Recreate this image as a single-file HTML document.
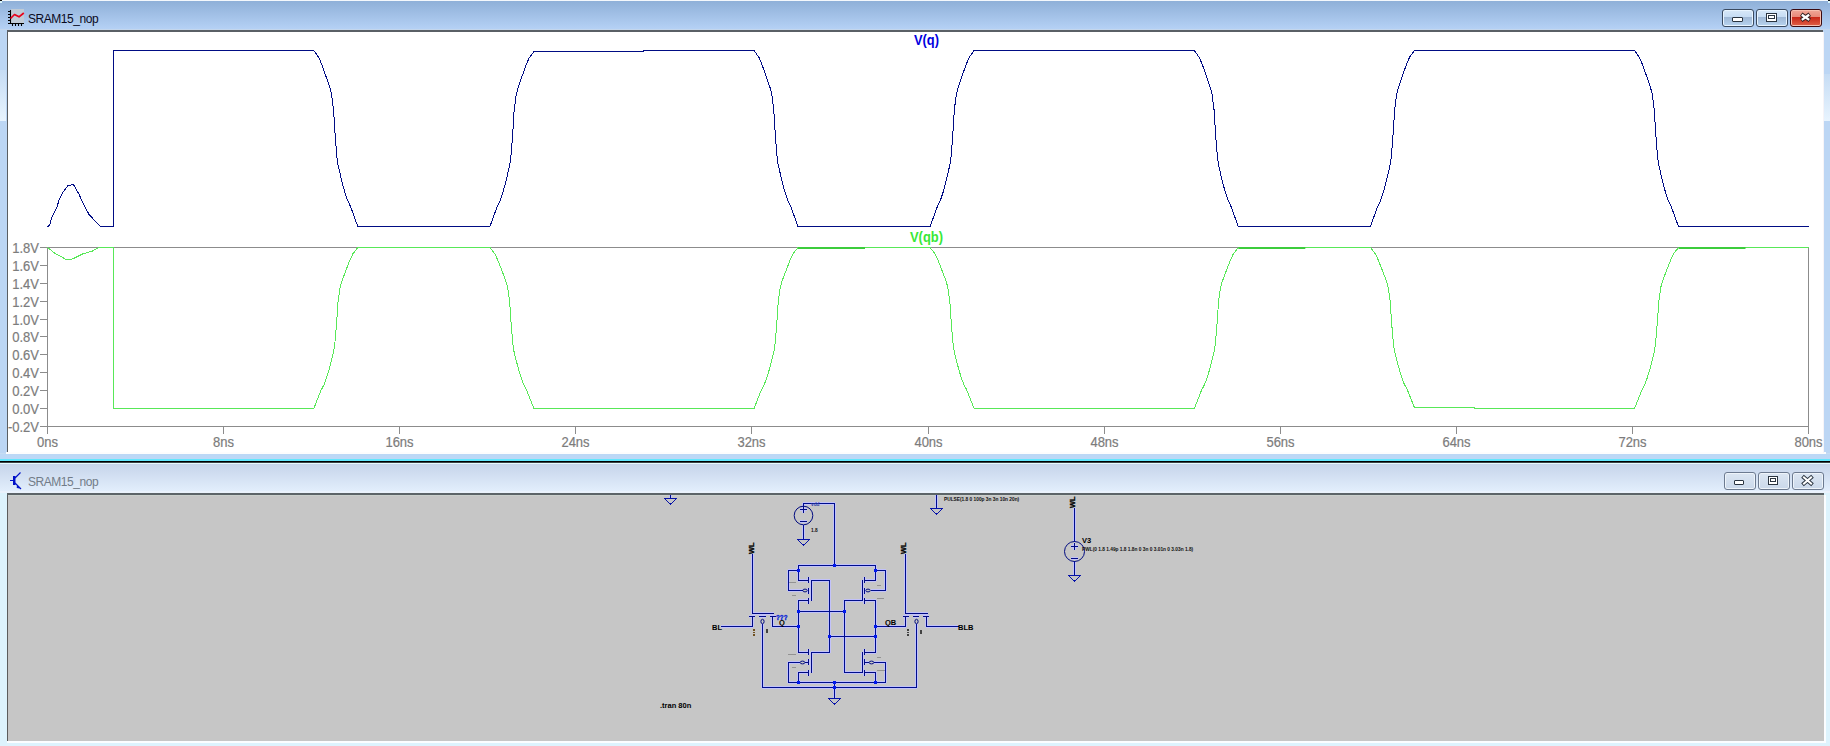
<!DOCTYPE html>
<html><head><meta charset="utf-8">
<style>
html,body{margin:0;padding:0;}
body{width:1830px;height:746px;overflow:hidden;position:relative;background:#c6dcf2;font-family:"Liberation Sans",sans-serif;}
.abs{position:absolute;}
svg text{font-family:"Liberation Sans",sans-serif;}
.ax{font-size:14px;fill:#7c7c7c;stroke:#7c7c7c;stroke-width:0.2px;}
.tt{font-size:14px;font-weight:bold;}
.lbl{font-size:7.5px;font-weight:bold;fill:#000;}
.tiny{font-size:4.8px;font-weight:bold;fill:#101010;}
.title{position:absolute;font-size:12px;letter-spacing:-0.45px;white-space:nowrap;}
.btn{position:absolute;box-sizing:border-box;border-radius:3px;}
</style></head><body>
<!-- top window frame -->
<div class="abs" style="left:0;top:0;width:1830px;height:1px;background:#f4f8fc"></div>
<div class="abs" style="left:0;top:1px;width:1830px;height:29px;background:linear-gradient(#8fb0d8,#b6d2f6)"></div>
<div class="abs" style="left:0;top:29px;width:1830px;height:1px;background:#c4d6ec"></div>
<div class="abs" style="left:0;top:30px;width:1830px;height:423px;background:#bcd6f4"></div>
<div class="abs" style="left:0;top:70px;width:6px;height:51px;background:linear-gradient(#c6dcf4,#e8f4fe)"></div>
<div class="abs" style="left:1824px;top:74px;width:6px;height:47px;background:linear-gradient(#c6dcf4,#e8f4fe)"></div>
<div class="abs" style="left:7px;top:30px;width:1816px;height:2px;background:#5a6066"></div>
<div class="abs" style="left:7px;top:32px;width:1px;height:420px;background:#5a5e62"></div>
<div class="abs" style="left:8px;top:32px;width:1815px;height:420px;background:#fff"></div>
<div class="abs" style="left:6px;top:452px;width:1820px;height:2px;background:#fdfdfd"></div>
<div class="abs" style="left:1823px;top:32px;width:1px;height:421px;background:#f6f4f8"></div>
<div class="abs" style="left:0;top:454px;width:1830px;height:5px;background:#bcd8f6"></div>
<div class="abs" style="left:0;top:459px;width:1830px;height:2px;background:#62e6fc"></div>
<div class="abs" style="left:0;top:461px;width:1830px;height:1px;background:#000"></div>
<div class="abs" style="left:0;top:462px;width:1830px;height:1px;background:#3a4448"></div>
<!-- bottom window frame -->
<div class="abs" style="left:0;top:463px;width:1830px;height:1px;background:#e6fafe"></div>
<div class="abs" style="left:0;top:464px;width:1830px;height:27px;background:linear-gradient(#c6d4ea,#e2eefc)"></div>
<div class="abs" style="left:0;top:491px;width:1830px;height:2px;background:#eaf2fc"></div>
<div class="abs" style="left:0;top:493px;width:1830px;height:253px;background:#ddf3fd"></div>
<div class="abs" style="left:7px;top:493px;width:1817px;height:2px;background:#5c6468"></div>
<div class="abs" style="left:7px;top:495px;width:1px;height:246px;background:#5c5c5c"></div>
<div class="abs" style="left:8px;top:495px;width:1816px;height:246px;background:#c6c6c6"></div>
<div class="abs" style="left:8px;top:495px;width:1816px;height:1px;background:#cad0cc"></div>
<div class="abs" style="left:7px;top:741px;width:1819px;height:2px;background:#fbfdff"></div>
<div class="abs" style="left:1824px;top:495px;width:2px;height:246px;background:#fbfdff"></div>

<div class="abs" style="left:0;top:0;width:2px;height:1px;background:#101010"></div>
<div class="abs" style="left:0;top:1px;width:2px;height:2px;background:#d8f4fc"></div>
<div class="abs" style="left:1828px;top:0;width:2px;height:1px;background:#101010"></div>
<div class="abs" style="left:1828px;top:1px;width:2px;height:2px;background:#d8f4fc"></div>
<!-- title texts -->
<div class="title" style="left:28px;top:12px;color:#0a0a1e">SRAM15_nop</div>
<div class="title" style="left:28px;top:474.5px;color:#727c88">SRAM15_nop</div>

<!-- icons -->
<svg class="abs" style="left:0;top:0" width="40" height="40">
<rect x="11" y="9" width="13" height="14" fill="#c6ccd2" opacity="0.85"/>
<path d="M10.5,10 V24 M8,11.5 H10 M8,14.5 H10 M8,17.5 H10 M8,20.5 H10 M8,23.5 H24 M12.5,24 V26 M15.5,24 V26 M18.5,24 V26 M21.5,24 V26" stroke="#000" stroke-width="1.1"/>
<path d="M10.5,18.5 L14.5,14.5 L19,16.8 L23.8,13" fill="none" stroke="#e8001a" stroke-width="1.7" stroke-linejoin="round"/>
</svg>
<svg class="abs" style="left:0;top:460px" width="40" height="40">
<path d="M10,20.5 H14 M14.5,16 V25 M15,18 L20.5,12.5 M15,23 L21,29" stroke="#0010c8" stroke-width="1.2" fill="none"/>
<rect x="13" y="16" width="2.4" height="9" fill="#0010c8"/>
<path d="M17.5,26 L19.5,28 L17,27.5 Z" fill="#0010c8" stroke="#0010c8" stroke-width="1"/>
</svg>

<!-- buttons top -->
<div class="btn" style="left:1722px;top:9px;width:32px;height:18px;border:1px solid #3a4a60;background:linear-gradient(#d8e8f8 0%,#c6dcf4 45%,#9fb8d6 46%,#b8d4f0 100%);box-shadow:inset 0 0 0 1px #e8f4ff"></div>
<div class="btn" style="left:1756px;top:9px;width:32px;height:18px;border:1px solid #3a4a60;background:linear-gradient(#d8e8f8 0%,#c6dcf4 45%,#9fb8d6 46%,#b8d4f0 100%);box-shadow:inset 0 0 0 1px #e8f4ff"></div>
<div class="btn" style="left:1790px;top:9px;width:32px;height:18px;border:1px solid #3a0a10;background:linear-gradient(#f0a898 0%,#e88878 45%,#c82818 46%,#e06048 100%);box-shadow:inset 0 0 0 1px #f8c0b0"></div>
<div class="abs" style="left:1732px;top:17px;width:11px;height:5px;box-sizing:border-box;border:1px solid #2a3440;border-radius:1px;background:#fff"></div>
<div class="abs" style="left:1766px;top:13px;width:11px;height:9px;box-sizing:border-box;border:1px solid #2a3440;background:#fff;box-shadow:inset 0 0 0 1px #fff"></div>
<div class="abs" style="left:1768px;top:15px;width:7px;height:4px;box-sizing:border-box;border:1px solid #2a3440"></div>
<svg class="abs" style="left:1790px;top:9px" width="32" height="18"><path d="M11.2,5.3 L19.8,11.3 M19.8,5.3 L11.2,11.3" stroke="#302020" stroke-width="4.2"/><path d="M11.8,5.7 L19.2,10.9 M19.2,5.7 L11.8,10.9" stroke="#fff" stroke-width="2.3"/></svg>
<!-- buttons bottom -->
<div class="btn" style="left:1724px;top:472px;width:32px;height:18px;border:1px solid #6c7a90;background:linear-gradient(#dce6f2,#cad8ea);box-shadow:inset 0 0 0 1px #eef4fa"></div>
<div class="btn" style="left:1758px;top:472px;width:32px;height:18px;border:1px solid #6c7a90;background:linear-gradient(#dce6f2,#cad8ea);box-shadow:inset 0 0 0 1px #eef4fa"></div>
<div class="btn" style="left:1792px;top:472px;width:32px;height:18px;border:1px solid #6c7a90;background:linear-gradient(#dce6f2,#cad8ea);box-shadow:inset 0 0 0 1px #eef4fa"></div>
<div class="abs" style="left:1734px;top:480px;width:10px;height:5px;box-sizing:border-box;border:1px solid #2a3440;border-radius:1px;background:#fff"></div>
<div class="abs" style="left:1768px;top:476px;width:10px;height:9px;box-sizing:border-box;border:1px solid #2a3440;background:#fff"></div>
<div class="abs" style="left:1770px;top:478px;width:6px;height:4px;box-sizing:border-box;border:1px solid #2a3440"></div>
<svg class="abs" style="left:1792px;top:472px" width="32" height="18"><path d="M12,5.5 L19,11.5 M19,5.5 L12,11.5" stroke="#2a3440" stroke-width="4" stroke-linecap="square"/><path d="M12,5.5 L19,11.5 M19,5.5 L12,11.5" stroke="#fff" stroke-width="2.1" stroke-linecap="square"/></svg>

<!-- plot -->
<svg class="abs" style="left:0;top:0" width="1830" height="460">
<path d="M47.5,247.5 H1808.5 V426.5 H47.5 Z" fill="none" stroke="#8c8c8c" stroke-width="1"/>
<path d="M40,247.5 H47" stroke="#8c8c8c" stroke-width="1"/>
<text transform="translate(39,252.5) scale(0.93,1)" class="ax" text-anchor="end">1.8V</text>
<path d="M40,265.5 H47" stroke="#8c8c8c" stroke-width="1"/>
<text transform="translate(39,270.5) scale(0.93,1)" class="ax" text-anchor="end">1.6V</text>
<path d="M40,283.5 H47" stroke="#8c8c8c" stroke-width="1"/>
<text transform="translate(39,288.5) scale(0.93,1)" class="ax" text-anchor="end">1.4V</text>
<path d="M40,301.5 H47" stroke="#8c8c8c" stroke-width="1"/>
<text transform="translate(39,306.5) scale(0.93,1)" class="ax" text-anchor="end">1.2V</text>
<path d="M40,319.5 H47" stroke="#8c8c8c" stroke-width="1"/>
<text transform="translate(39,324.5) scale(0.93,1)" class="ax" text-anchor="end">1.0V</text>
<path d="M40,336.5 H47" stroke="#8c8c8c" stroke-width="1"/>
<text transform="translate(39,341.5) scale(0.93,1)" class="ax" text-anchor="end">0.8V</text>
<path d="M40,354.5 H47" stroke="#8c8c8c" stroke-width="1"/>
<text transform="translate(39,359.5) scale(0.93,1)" class="ax" text-anchor="end">0.6V</text>
<path d="M40,372.5 H47" stroke="#8c8c8c" stroke-width="1"/>
<text transform="translate(39,377.5) scale(0.93,1)" class="ax" text-anchor="end">0.4V</text>
<path d="M40,390.5 H47" stroke="#8c8c8c" stroke-width="1"/>
<text transform="translate(39,395.5) scale(0.93,1)" class="ax" text-anchor="end">0.2V</text>
<path d="M40,408.5 H47" stroke="#8c8c8c" stroke-width="1"/>
<text transform="translate(39,413.5) scale(0.93,1)" class="ax" text-anchor="end">0.0V</text>
<path d="M40,426.5 H47" stroke="#8c8c8c" stroke-width="1"/>
<text transform="translate(39,431.5) scale(0.93,1)" class="ax" text-anchor="end">-0.2V</text>
<path d="M47.5,426 V434" stroke="#8c8c8c" stroke-width="1"/>
<text transform="translate(47.5,446.8) scale(0.93,1)" class="ax" text-anchor="middle">0ns</text>
<path d="M223.5,426 V434" stroke="#8c8c8c" stroke-width="1"/>
<text transform="translate(223.5,446.8) scale(0.93,1)" class="ax" text-anchor="middle">8ns</text>
<path d="M399.5,426 V434" stroke="#8c8c8c" stroke-width="1"/>
<text transform="translate(399.5,446.8) scale(0.93,1)" class="ax" text-anchor="middle">16ns</text>
<path d="M575.5,426 V434" stroke="#8c8c8c" stroke-width="1"/>
<text transform="translate(575.5,446.8) scale(0.93,1)" class="ax" text-anchor="middle">24ns</text>
<path d="M751.5,426 V434" stroke="#8c8c8c" stroke-width="1"/>
<text transform="translate(751.5,446.8) scale(0.93,1)" class="ax" text-anchor="middle">32ns</text>
<path d="M928.5,426 V434" stroke="#8c8c8c" stroke-width="1"/>
<text transform="translate(928.5,446.8) scale(0.93,1)" class="ax" text-anchor="middle">40ns</text>
<path d="M1104.5,426 V434" stroke="#8c8c8c" stroke-width="1"/>
<text transform="translate(1104.5,446.8) scale(0.93,1)" class="ax" text-anchor="middle">48ns</text>
<path d="M1280.5,426 V434" stroke="#8c8c8c" stroke-width="1"/>
<text transform="translate(1280.5,446.8) scale(0.93,1)" class="ax" text-anchor="middle">56ns</text>
<path d="M1456.5,426 V434" stroke="#8c8c8c" stroke-width="1"/>
<text transform="translate(1456.5,446.8) scale(0.93,1)" class="ax" text-anchor="middle">64ns</text>
<path d="M1632.5,426 V434" stroke="#8c8c8c" stroke-width="1"/>
<text transform="translate(1632.5,446.8) scale(0.93,1)" class="ax" text-anchor="middle">72ns</text>
<path d="M1808.5,426 V434" stroke="#8c8c8c" stroke-width="1"/>
<text transform="translate(1808.5,446.8) scale(0.93,1)" class="ax" text-anchor="middle">80ns</text>
<path d="M47.5,226.5 L49.4,225.6 L52.1,216.9 L57.4,206.2 L58.8,200.2 L63.5,191.4 L68.2,185.4 L73.5,184.6 L78.9,194.1 L82.9,202.8 L88.9,214.2 L95.0,220.9 L100.3,226.5 L113.5,226.5 L113.5,50.5 L313.8,50.5 L318.8,57.5 L321.8,64.6 L324.3,71.6 L326.8,78.7 L329.8,87.5 L331.5,94.0 L332.5,101.5 L333.6,110.2 L334.7,128.5 L335.7,142.5 L336.8,155.9 L337.9,164.2 L340.6,176.0 L342.7,184.6 L344.8,192.2 L347.5,200.3 L350.5,206.4 L357.8,226.5 L489.9,226.5 L497.2,206.6 L500.2,200.4 L502.9,192.4 L505.0,184.8 L507.1,176.3 L509.8,164.6 L510.9,156.3 L512.0,143.0 L513.0,129.0 L514.1,110.8 L515.2,102.2 L516.2,94.7 L517.9,88.2 L520.9,79.5 L523.4,72.5 L525.9,65.5 L528.9,58.5 L533.9,51.5 L643.5,51.5 L643.5,50.5 L754.0,50.5 L759.0,57.5 L762.0,64.6 L764.5,71.6 L767.0,78.7 L770.0,87.5 L771.7,94.0 L772.7,101.5 L773.8,110.2 L774.9,128.5 L775.9,142.5 L777.0,155.9 L778.1,164.2 L780.8,176.0 L782.9,184.6 L785.0,192.2 L787.7,200.3 L790.7,206.4 L798.0,226.5 L930.1,226.5 L937.4,206.4 L940.4,200.3 L943.1,192.2 L945.2,184.6 L947.3,176.0 L950.0,164.2 L951.1,155.9 L952.2,142.5 L953.2,128.5 L954.3,110.2 L955.4,101.5 L956.4,94.0 L958.1,87.5 L961.1,78.7 L963.6,71.6 L966.1,64.6 L969.1,57.5 L974.1,50.5 L1194.3,50.5 L1199.3,57.5 L1202.3,64.6 L1204.8,71.6 L1207.3,78.7 L1210.3,87.5 L1212.0,94.0 L1213.0,101.5 L1214.1,110.2 L1215.2,128.5 L1216.2,142.5 L1217.3,155.9 L1218.4,164.2 L1221.1,176.0 L1223.2,184.6 L1225.3,192.2 L1228.0,200.3 L1231.0,206.4 L1238.3,226.5 L1370.4,226.5 L1377.7,206.4 L1380.7,200.3 L1383.4,192.2 L1385.5,184.6 L1387.6,176.0 L1390.3,164.2 L1391.4,155.9 L1392.5,142.5 L1393.5,128.5 L1394.6,110.2 L1395.7,101.5 L1396.7,94.0 L1398.4,87.5 L1401.4,78.7 L1403.9,71.6 L1406.4,64.6 L1409.4,57.5 L1414.4,50.5 L1634.5,50.5 L1639.5,57.5 L1642.5,64.6 L1645.0,71.6 L1647.5,78.7 L1650.5,87.5 L1652.2,94.0 L1653.2,101.5 L1654.3,110.2 L1655.4,128.5 L1656.4,142.5 L1657.5,155.9 L1658.6,164.2 L1661.3,176.0 L1663.4,184.6 L1665.5,192.2 L1668.2,200.3 L1671.2,206.4 L1678.5,226.5 L1808.5,226.5" fill="none" stroke="#000c84" stroke-width="1" shape-rendering="crispEdges"/>
<path d="M47.5,247.5 L54.7,253.1 L65.5,259.1 L72.2,259.1 L82.9,253.8 L92.3,251.1 L99.0,247.5 L113.5,247.5 L113.5,408.5 L313.8,408.5 L321.1,390.1 L324.1,384.5 L326.8,377.1 L328.9,370.2 L331.0,362.3 L333.7,351.5 L334.8,343.9 L335.9,331.7 L336.9,318.8 L338.0,302.1 L339.1,294.2 L340.1,287.3 L341.8,281.3 L344.8,273.3 L347.3,266.8 L349.8,260.4 L352.8,253.9 L357.8,247.5 L489.9,247.5 L494.9,253.9 L497.9,260.4 L500.4,266.8 L502.9,273.3 L505.9,281.3 L507.6,287.3 L508.6,294.2 L509.7,302.1 L510.8,318.8 L511.8,331.7 L512.9,343.9 L514.0,351.5 L516.7,362.3 L518.8,370.2 L520.9,377.1 L523.6,384.5 L526.6,390.1 L533.9,408.5 L754.0,408.5 L761.3,390.1 L764.3,384.5 L767.0,377.1 L769.1,370.2 L771.2,362.3 L773.9,351.5 L775.0,343.9 L776.1,331.7 L777.1,318.8 L778.2,302.1 L779.3,294.2 L780.3,287.3 L782.0,281.3 L785.0,273.3 L787.5,266.8 L790.0,260.4 L793.0,253.9 L798.0,247.5 L930.1,247.5 L935.1,253.9 L938.1,260.4 L940.6,266.8 L943.1,273.3 L946.1,281.3 L947.8,287.3 L948.8,294.2 L949.9,302.1 L951.0,318.8 L952.0,331.7 L953.1,343.9 L954.2,351.5 L956.9,362.3 L959.0,370.2 L961.1,377.1 L963.8,384.5 L966.8,390.1 L974.1,408.5 L1194.3,408.5 L1201.6,390.1 L1204.6,384.5 L1207.3,377.1 L1209.4,370.2 L1211.5,362.3 L1214.2,351.5 L1215.3,343.9 L1216.4,331.7 L1217.4,318.8 L1218.5,302.1 L1219.6,294.2 L1220.6,287.3 L1222.3,281.3 L1225.3,273.3 L1227.8,266.8 L1230.3,260.4 L1233.3,253.9 L1238.3,247.5 L1370.4,247.5 L1375.4,253.9 L1378.4,260.3 L1380.9,266.7 L1383.4,273.1 L1386.4,281.1 L1388.1,287.0 L1389.1,293.9 L1390.2,301.7 L1391.3,318.4 L1392.3,331.2 L1393.4,343.3 L1394.5,350.9 L1397.2,361.6 L1399.3,369.4 L1401.4,376.3 L1404.1,383.7 L1407.1,389.3 L1414.4,407.5 L1474.5,407.5 L1474.5,408.5 L1634.5,408.5 L1641.8,390.1 L1644.8,384.5 L1647.5,377.1 L1649.6,370.2 L1651.7,362.3 L1654.4,351.5 L1655.5,343.9 L1656.6,331.7 L1657.6,318.8 L1658.7,302.1 L1659.8,294.2 L1660.8,287.3 L1662.5,281.3 L1665.5,273.3 L1668.0,266.8 L1670.5,260.4 L1673.5,253.9 L1678.5,247.5 L1808.5,247.5" fill="none" stroke="#58e858" stroke-width="1" shape-rendering="crispEdges"/>
<rect x="798.0" y="247" width="67" height="2" fill="#3ccc3c"/>
<rect x="1238.3" y="247" width="67" height="2" fill="#3ccc3c"/>
<rect x="1678.5" y="247" width="67" height="2" fill="#3ccc3c"/>
<text x="914" y="45.3" class="tt" style="fill:#0000e0" textLength="25" lengthAdjust="spacingAndGlyphs">V(q)</text>
<text x="910" y="241.7" class="tt" style="fill:#38e838" textLength="33" lengthAdjust="spacingAndGlyphs">V(qb)</text>
</svg>
<!-- schematic -->
<svg class="abs" style="left:0;top:0" width="1830" height="746" shape-rendering="crispEdges" stroke-width="1">
<path d="M670.5,495 V499 M803.5,503 V507 M803,503.5 H835 M834.5,503 V566 M800,509.5 H807 M803.5,507 V513 M800,521.5 H807 M803.5,525 V540 M752.5,554 V614 M752,613.5 H774 M749,616.5 H755 M759,616.5 H766 M770,616.5 H776 M752.5,616 V627 M721,626.5 H753 M772.5,616 V627 M772,626.5 H799 M762.5,624 V688 M905.5,554 V614 M905,613.5 H928 M903,616.5 H909 M913,616.5 H919 M923,616.5 H929 M905.5,616 V627 M875,626.5 H906 M926.5,616 V627 M926,626.5 H959 M916.5,624 V688 M798,565.5 H876 M798.5,565 V581 M875.5,565 V581 M788,570.5 H799 M788.5,570 V591 M788,590.5 H803 M798,580.5 H809 M808.5,577 V583 M808.5,588 V594 M808.5,598 V604 M811.5,580 V601 M811,580.5 H830 M829.5,580 V653 M798,600.5 H809 M798.5,600 V627 M875,570.5 H886 M885.5,570 V591 M871,590.5 H886 M864,580.5 H876 M864.5,577 V583 M864.5,588 V594 M864.5,598 V604 M862.5,580 V601 M844,600.5 H863 M844.5,600 V673 M864,600.5 H876 M875.5,600 V653 M875.5,672 V683 M798,611.5 H845 M829,636.5 H876 M798.5,626 V653 M798,652.5 H809 M808.5,649 V655 M808.5,659 V665 M808.5,670 V676 M811.5,652 V673 M811,652.5 H830 M788,662.5 H800 M788.5,662 V683 M805,662.5 H808 M798,672.5 H809 M798.5,672 V683 M864,652.5 H876 M864.5,649 V655 M864.5,659 V665 M864.5,670 V676 M862.5,652 V673 M844,672.5 H863 M874,662.5 H886 M885.5,662 V683 M865,662.5 H869 M864,672.5 H876 M788,682.5 H886 M834.5,682 V699 M762,687.5 H917 M936.5,495 V509 M1074.5,508 V542 M1071,546.5 H1078 M1074.5,543 V550 M1071,558.5 H1078 M1074.5,561 V576" stroke="#c2c2fa" stroke-width="3" fill="none"/>
<path d="M670.5,495 V499" stroke="#000e8c"/>
<path d="M664.5,498.5 H676.5 L670.5,504.2 Z" fill="none" stroke="#0612a8" stroke-linejoin="miter"/>
<path d="M803.5,503 V507" stroke="#000e8c"/>
<path d="M803,503.5 H835" stroke="#000e8c"/>
<path d="M834.5,503 V566" stroke="#000e8c"/>
<circle shape-rendering="geometricPrecision" cx="803.5" cy="515.5" r="9.3" fill="none" stroke="#000a80"/>
<path d="M800,509.5 H807" stroke="#000a80"/>
<path d="M803.5,507 V513" stroke="#000a80"/>
<path d="M800,521.5 H807" stroke="#000a80"/>
<path d="M803.5,525 V540" stroke="#000e8c"/>
<path d="M797.5,539.5 H809.5 L803.5,545.2 Z" fill="none" stroke="#0612a8" stroke-linejoin="miter"/>
<text x="811" y="506" class="tiny" style="fill:#3040a0">vdd</text>
<text x="811" y="531.5" class="tiny">1.8</text>
<text transform="translate(754.0,554.0) rotate(-90)" class="lbl" style="stroke:#000;stroke-width:0.3px">WL</text>
<text transform="translate(906.0,554.0) rotate(-90)" class="lbl" style="stroke:#000;stroke-width:0.3px">WL</text>
<text transform="translate(1075.0,508.0) rotate(-90)" class="lbl" style="stroke:#000;stroke-width:0.3px">WL</text>
<path d="M752.5,554 V614" stroke="#000e8c"/>
<path d="M752,613.5 H774" stroke="#000a80"/>
<path d="M749,616.5 H755" stroke="#000a80"/>
<path d="M759,616.5 H766" stroke="#000a80"/>
<path d="M770,616.5 H776" stroke="#000a80"/>
<path d="M752.5,616 V627" stroke="#000a80"/>
<path d="M721,626.5 H753" stroke="#000e8c"/>
<path d="M772.5,616 V627" stroke="#000a80"/>
<path d="M772,626.5 H799" stroke="#000e8c"/>
<ellipse shape-rendering="geometricPrecision" cx="762.5" cy="621.5" rx="1.6" ry="2.2" fill="none" stroke="#000a80"/>
<path d="M762.5,624 V688" stroke="#000e8c"/>
<text x="712" y="629.5" class="lbl">BL</text>
<text x="776" y="620" class="lbl" style="fill:#0a24d8;stroke:#0a24d8;stroke-width:0.35px;font-size:8px" textLength="11.5" lengthAdjust="spacingAndGlyphs">???</text>
<text x="779" y="624.5" class="lbl">Q</text>
<path d="M753,630 h2 M753,632.5 h2 M753,635 h2" stroke="#705020" stroke-width="1.6"/>
<rect x="766" y="629" width="2" height="4" fill="#202020" opacity="0.8"/>
<path d="M905.5,554 V614" stroke="#000e8c"/>
<path d="M905,613.5 H928" stroke="#000a80"/>
<path d="M903,616.5 H909" stroke="#000a80"/>
<path d="M913,616.5 H919" stroke="#000a80"/>
<path d="M923,616.5 H929" stroke="#000a80"/>
<path d="M905.5,616 V627" stroke="#000a80"/>
<path d="M875,626.5 H906" stroke="#000e8c"/>
<path d="M926.5,616 V627" stroke="#000a80"/>
<path d="M926,626.5 H959" stroke="#000e8c"/>
<ellipse shape-rendering="geometricPrecision" cx="916.5" cy="621.5" rx="1.6" ry="2.2" fill="none" stroke="#000a80"/>
<path d="M916.5,624 V688" stroke="#000e8c"/>
<text x="885" y="624.8" class="lbl">QB</text>
<text x="958" y="629.5" class="lbl">BLB</text>
<path d="M907,630 h2 M907,632.5 h2 M907,635 h2" stroke="#404040" stroke-width="1.6"/>
<rect x="920" y="630" width="2" height="4" fill="#202020" opacity="0.8"/>
<path d="M798,565.5 H876" stroke="#000e8c"/>
<path d="M798.5,565 V581" stroke="#000e8c"/>
<path d="M875.5,565 V581" stroke="#000e8c"/>
<path d="M788,570.5 H799" stroke="#000e8c"/>
<path d="M788.5,570 V591" stroke="#000e8c"/>
<path d="M788,590.5 H803" stroke="#000e8c"/>
<ellipse shape-rendering="geometricPrecision" cx="805" cy="590.5" rx="2.2" ry="1.4" fill="none" stroke="#000a80"/>
<path d="M798,580.5 H809" stroke="#000a80"/>
<path d="M808.5,577 V583" stroke="#000a80"/>
<path d="M808.5,588 V594" stroke="#000a80"/>
<path d="M808.5,598 V604" stroke="#000a80"/>
<path d="M811.5,580 V601" stroke="#000a80"/>
<path d="M811,580.5 H830" stroke="#000e8c"/>
<path d="M829.5,580 V653" stroke="#000e8c"/>
<path d="M798,600.5 H809" stroke="#000a80"/>
<path d="M798.5,600 V627" stroke="#000e8c"/>
<path d="M875,570.5 H886" stroke="#000e8c"/>
<path d="M885.5,570 V591" stroke="#000e8c"/>
<path d="M871,590.5 H886" stroke="#000e8c"/>
<ellipse shape-rendering="geometricPrecision" cx="868" cy="590.5" rx="2.2" ry="1.4" fill="none" stroke="#000a80"/>
<path d="M864,580.5 H876" stroke="#000a80"/>
<path d="M864.5,577 V583" stroke="#000a80"/>
<path d="M864.5,588 V594" stroke="#000a80"/>
<path d="M864.5,598 V604" stroke="#000a80"/>
<path d="M862.5,580 V601" stroke="#000a80"/>
<path d="M844,600.5 H863" stroke="#000e8c"/>
<path d="M844.5,600 V673" stroke="#000e8c"/>
<path d="M864,600.5 H876" stroke="#000a80"/>
<path d="M875.5,600 V653" stroke="#000e8c"/>
<path d="M875.5,672 V683" stroke="#000e8c"/>
<path d="M798,611.5 H845" stroke="#000e8c"/>
<path d="M829,636.5 H876" stroke="#000e8c"/>
<path d="M798.5,626 V653" stroke="#000e8c"/>
<path d="M798,652.5 H809" stroke="#000a80"/>
<path d="M808.5,649 V655" stroke="#000a80"/>
<path d="M808.5,659 V665" stroke="#000a80"/>
<path d="M808.5,670 V676" stroke="#000a80"/>
<path d="M811.5,652 V673" stroke="#000a80"/>
<path d="M811,652.5 H830" stroke="#000e8c"/>
<path d="M788,662.5 H800" stroke="#000e8c"/>
<path d="M788.5,662 V683" stroke="#000e8c"/>
<path d="M805,662.5 H808" stroke="#000a80"/>
<ellipse shape-rendering="geometricPrecision" cx="802.5" cy="662.5" rx="2.3" ry="1.4" fill="none" stroke="#000a80"/>
<path d="M798,672.5 H809" stroke="#000a80"/>
<path d="M798.5,672 V683" stroke="#000e8c"/>
<path d="M864,652.5 H876" stroke="#000a80"/>
<path d="M864.5,649 V655" stroke="#000a80"/>
<path d="M864.5,659 V665" stroke="#000a80"/>
<path d="M864.5,670 V676" stroke="#000a80"/>
<path d="M862.5,652 V673" stroke="#000a80"/>
<path d="M844,672.5 H863" stroke="#000e8c"/>
<path d="M874,662.5 H886" stroke="#000e8c"/>
<path d="M885.5,662 V683" stroke="#000e8c"/>
<path d="M865,662.5 H869" stroke="#000a80"/>
<ellipse shape-rendering="geometricPrecision" cx="871.5" cy="662.5" rx="2.3" ry="1.4" fill="none" stroke="#000a80"/>
<path d="M864,672.5 H876" stroke="#000a80"/>
<path d="M788,682.5 H886" stroke="#000e8c"/>
<path d="M834.5,682 V699" stroke="#000e8c"/>
<path d="M762,687.5 H917" stroke="#000e8c"/>
<path d="M828.5,698.5 H840.5 L834.5,704.2 Z" fill="none" stroke="#0612a8" stroke-linejoin="miter"/>
<rect x="833" y="564" width="3" height="3" fill="#0018f0"/>
<rect x="797" y="569" width="3" height="3" fill="#0018f0"/>
<rect x="874" y="569" width="3" height="3" fill="#0018f0"/>
<rect x="797" y="610" width="3" height="3" fill="#0018f0"/>
<rect x="843" y="610" width="3" height="3" fill="#0018f0"/>
<rect x="797" y="625" width="3" height="3" fill="#0018f0"/>
<rect x="874" y="625" width="3" height="3" fill="#0018f0"/>
<rect x="828" y="635" width="3" height="3" fill="#0018f0"/>
<rect x="874" y="635" width="3" height="3" fill="#0018f0"/>
<rect x="797" y="681" width="3" height="3" fill="#0018f0"/>
<rect x="833" y="681" width="3" height="3" fill="#0018f0"/>
<rect x="874" y="681" width="3" height="3" fill="#0018f0"/>
<rect x="833" y="686" width="3" height="3" fill="#0018f0"/>
<rect x="789" y="582" width="7" height="1" fill="#606060" opacity="0.5"/>
<rect x="792" y="595" width="4" height="1" fill="#606060" opacity="0.5"/>
<rect x="877" y="585" width="4" height="1" fill="#606060" opacity="0.5"/>
<rect x="877" y="598" width="7" height="1" fill="#606060" opacity="0.5"/>
<rect x="788" y="654" width="8" height="1" fill="#606060" opacity="0.5"/>
<rect x="792" y="667" width="4" height="1" fill="#606060" opacity="0.5"/>
<rect x="877" y="657" width="4" height="1" fill="#606060" opacity="0.5"/>
<rect x="877" y="670" width="8" height="1" fill="#606060" opacity="0.5"/>
<path d="M936.5,495 V509" stroke="#000e8c"/>
<path d="M930.5,508.5 H942.5 L936.5,514.2 Z" fill="none" stroke="#0612a8" stroke-linejoin="miter"/>
<text x="944" y="501" class="tiny">PULSE(1.8 0 100p 3n 3n 10n 20n)</text>
<path d="M1074.5,508 V542" stroke="#000e8c"/>
<circle shape-rendering="geometricPrecision" cx="1074.5" cy="551.5" r="10" fill="none" stroke="#000a80"/>
<path d="M1071,546.5 H1078" stroke="#000a80"/>
<path d="M1074.5,543 V550" stroke="#000a80"/>
<path d="M1071,558.5 H1078" stroke="#000a80"/>
<path d="M1074.5,561 V576" stroke="#000e8c"/>
<path d="M1068.5,575.5 H1080.5 L1074.5,581.2 Z" fill="none" stroke="#0612a8" stroke-linejoin="miter"/>
<text x="1082" y="542.5" class="lbl">V3</text>
<text x="1082" y="550.5" class="tiny">PWL(0 1.8 1.49p 1.8 1.8n 0 3n 0 3.01n 0 3.03n 1.8)</text>
<text x="660" y="708" class="lbl">.tran 80n</text>
</svg>
</body></html>
